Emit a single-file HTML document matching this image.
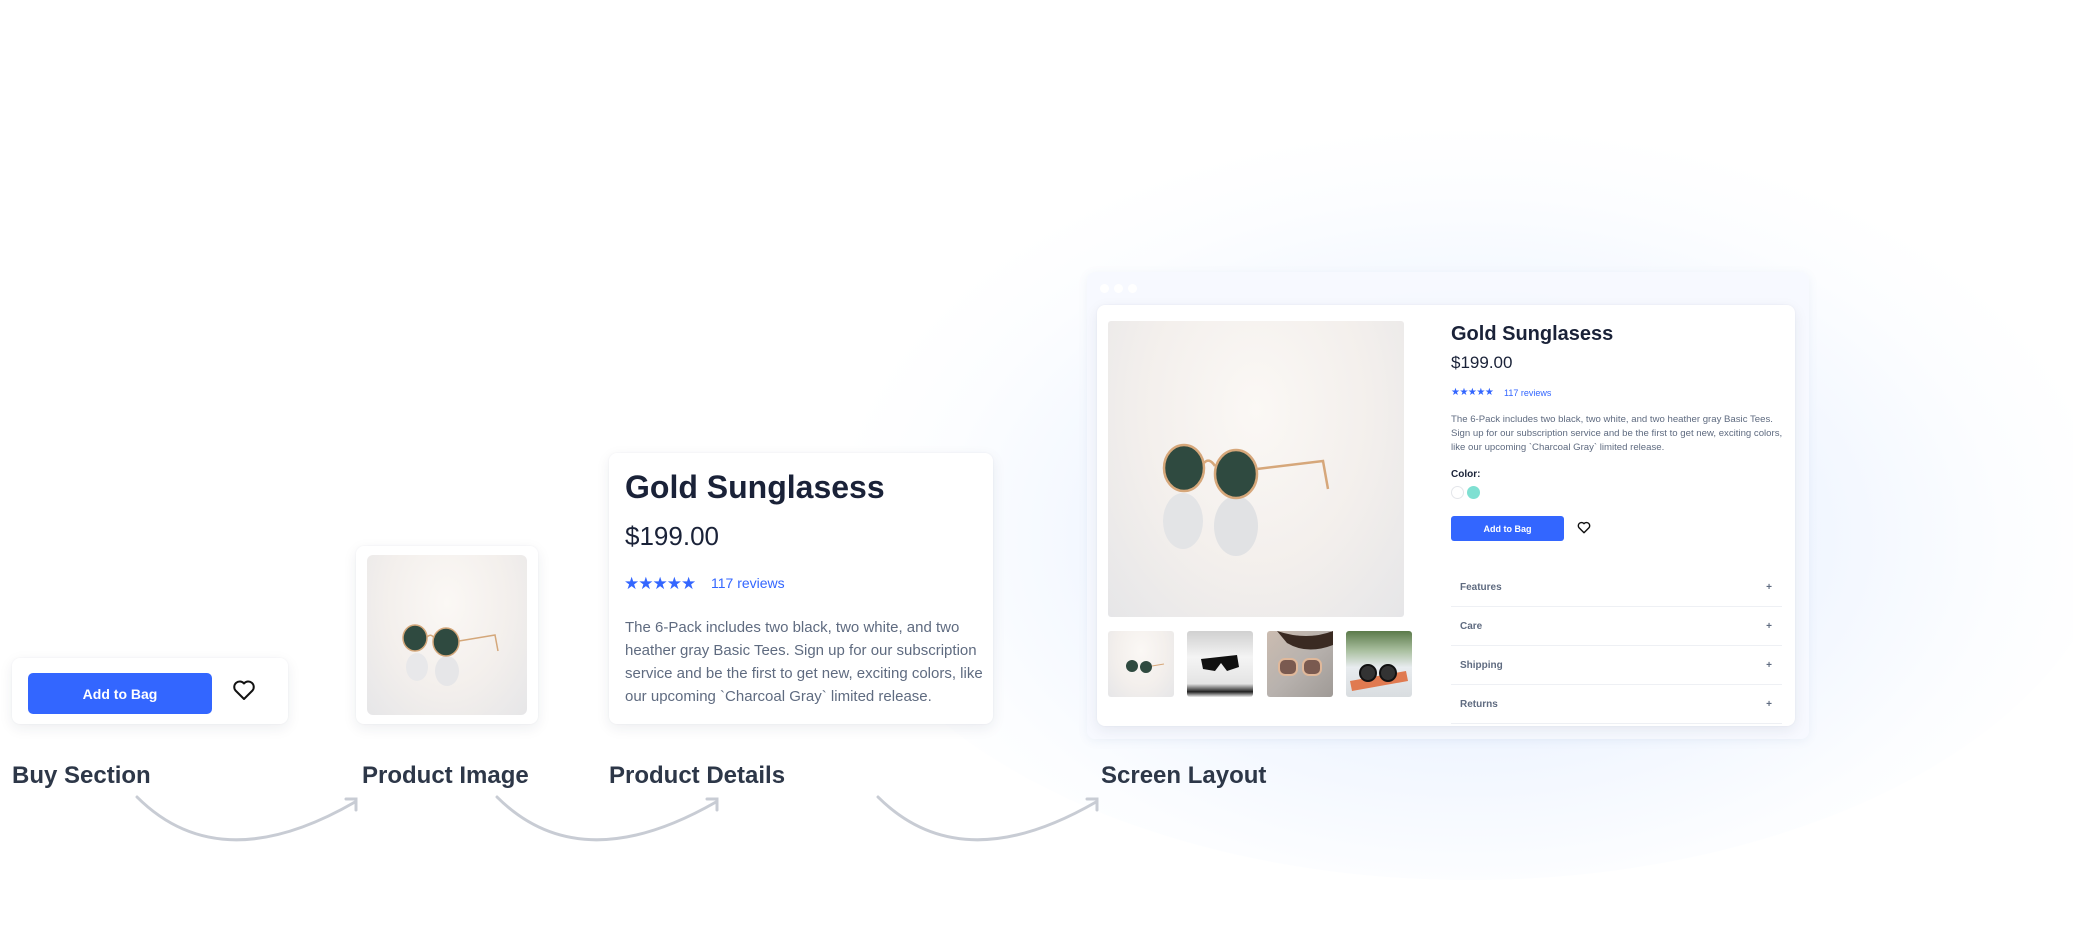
<!DOCTYPE html>
<html><head><meta charset="utf-8"><style>
*{margin:0;padding:0;box-sizing:border-box}
body{width:2073px;height:944px;overflow:hidden;position:relative;background:#fff;font-family:"Liberation Sans",sans-serif}
.abs{position:absolute}
.glow{left:820px;top:120px;width:1300px;height:760px;border-radius:50%;background:radial-gradient(ellipse at 50% 55%,rgba(218,232,255,.85) 0%,rgba(228,238,255,.55) 35%,rgba(242,247,255,.25) 58%,rgba(255,255,255,0) 70%)}
.card{background:#fff;border-radius:8px;box-shadow:0 4px 14px rgba(30,40,70,.08),0 0 2px rgba(30,40,70,.05)}
.btn{background:#3366ff;color:#fff;border-radius:5px;display:flex;align-items:center;justify-content:center;font-weight:bold}
.lbl{font-size:24px;color:#2d3748;top:762px;font-weight:bold}
.photo{background:radial-gradient(ellipse at 50% 30%,#fbf8f5 0%,#f3efec 55%,#e6e6e8 100%);overflow:hidden}
.desc{color:#5f6b80}
.acc{left:1451px;width:331px;height:39px;border-bottom:1px solid #eef0f4;font-size:10px;color:#5f6b80;font-weight:bold;padding-left:9px;display:flex;align-items:center;justify-content:space-between;padding-right:10px}
</style></head><body>
<div class="abs glow"></div>

<div class="abs card" style="left:12px;top:658px;width:276px;height:66px"></div>
<div class="abs btn" style="left:28px;top:673px;width:184px;height:41px;font-size:14px">Add to Bag</div>
<svg class="abs" style="left:232px;top:679px" width="24" height="22" viewBox="0 0 24 22"><path d="M12 20 L3.5 11.5 A5 5 0 0 1 12 4.5 A5 5 0 0 1 20.5 11.5 Z" fill="none" stroke="#111" stroke-width="2" stroke-linejoin="round"/></svg>

<div class="abs card" style="left:356px;top:546px;width:182px;height:178px"></div>
<div class="abs photo" style="left:367px;top:555px;width:160px;height:160px;border-radius:6px">
<svg width="160" height="160" viewBox="0 0 160 160"><ellipse cx="50" cy="112" rx="11" ry="14" fill="#e8e8ea"/><ellipse cx="80" cy="116" rx="12" ry="15" fill="#e6e6e8"/><ellipse cx="48" cy="83" rx="12" ry="13" fill="#2f4a40" stroke="#d4a77a" stroke-width="1.5"/><ellipse cx="79" cy="87" rx="13" ry="14" fill="#2f4a40" stroke="#d4a77a" stroke-width="1.5"/><path d="M60 82 Q64 78 67 83 M92 86 L128 80 L131 96" fill="none" stroke="#d4a77a" stroke-width="1.5"/></svg></div>

<div class="abs card" style="left:609px;top:453px;width:384px;height:271px"></div>
<div class="abs" style="left:625px;top:469px;font-size:32px;font-weight:bold;color:#1a2238">Gold Sunglasess</div>
<div class="abs" style="left:625px;top:521px;font-size:26px;color:#1a2238">$199.00</div>
<div class="abs" style="left:624px;top:574px;font-size:17px;color:#3366ff;letter-spacing:-1px">★★★★★</div>
<div class="abs" style="left:711px;top:575px;font-size:14px;color:#3366ff">117 reviews</div>
<div class="abs desc" style="left:625px;top:616px;width:362px;font-size:15px;line-height:23px">The 6-Pack includes two black, two white, and two heather gray Basic Tees. Sign up for our subscription service and be the first to get new, exciting colors, like our upcoming `Charcoal Gray` limited release.</div>

<div class="abs lbl" style="left:12px">Buy Section</div>
<div class="abs lbl" style="left:362px">Product Image</div>
<div class="abs lbl" style="left:609px">Product Details</div>
<div class="abs lbl" style="left:1101px">Screen Layout</div>

<svg class="abs" style="left:0;top:0" width="2073" height="944"><g fill="none" stroke="#c8ccd4" stroke-width="3" stroke-linecap="round">
<path d="M137 797 Q220 880 355 802 M346 799 L356 799 L356 810"/>
<path d="M497 797 Q580 880 716 802 M707 799 L717 799 L717 810"/>
<path d="M878 797 Q961 880 1096 802 M1087 799 L1097 799 L1097 810"/>
</g></svg>

<div class="abs" style="left:1087px;top:272px;width:722px;height:467px;border-radius:8px;background:rgba(246,249,255,.92);box-shadow:0 2px 10px rgba(80,110,170,.08)"></div>
<div class="abs" style="left:1100px;top:284px;width:9px;height:9px;border-radius:50%;background:#fff"></div>
<div class="abs" style="left:1114px;top:284px;width:9px;height:9px;border-radius:50%;background:#fff"></div>
<div class="abs" style="left:1128px;top:284px;width:9px;height:9px;border-radius:50%;background:#fff"></div>
<div class="abs card" style="left:1097px;top:305px;width:698px;height:421px"></div>
<div class="abs photo" style="left:1108px;top:321px;width:296px;height:296px;border-radius:3px">
<svg width="296" height="296" viewBox="0 0 296 296"><ellipse cx="75" cy="200" rx="20" ry="28" fill="#e3e4e6"/><ellipse cx="128" cy="205" rx="22" ry="30" fill="#e1e2e4"/><ellipse cx="76" cy="147" rx="20" ry="23" fill="#2f4a40" stroke="#d6a77a" stroke-width="2.5"/><ellipse cx="128" cy="153" rx="21" ry="24" fill="#2f4a40" stroke="#d6a77a" stroke-width="2.5"/><path d="M96 142 Q101 136 107 145 M149 148 L215 140 L220 168" fill="none" stroke="#d6a77a" stroke-width="2.5"/></svg></div>
<div class="abs photo" style="left:1108px;top:631px;width:66px;height:66px;border-radius:3px"><svg width="66" height="66"><circle cx="24" cy="35" r="6" fill="#2f4a40"/><circle cx="38" cy="36" r="6" fill="#2f4a40"/><path d="M44 35 L56 33" stroke="#d6a77a"/></svg></div>
<div class="abs" style="left:1187px;top:631px;width:66px;height:66px;border-radius:3px;background:linear-gradient(#d0d0d0,#f4f4f4 40%,#e4e4e4 80%,#222 92%,#eee)"><svg width="66" height="66"><path d="M14 28 L50 24 L52 36 L40 40 L34 32 L28 40 L16 38 Z" fill="#111"/></svg></div>
<div class="abs" style="left:1267px;top:631px;width:66px;height:66px;border-radius:3px;background:linear-gradient(135deg,#cbbcb0,#b8b2ae 50%,#9f9a96)"><svg width="66" height="66"><path d="M10 0 Q40 10 66 0 L66 14 Q40 24 20 12Z" fill="#3a2a22"/><rect x="12" y="28" width="18" height="16" rx="6" fill="#7a5a50" stroke="#e0b89a" stroke-width="2"/><rect x="36" y="28" width="18" height="16" rx="6" fill="#7a5a50" stroke="#e0b89a" stroke-width="2"/></svg></div>
<div class="abs" style="left:1346px;top:631px;width:66px;height:66px;border-radius:3px;background:linear-gradient(#5b7a4a,#aac0a0 30%,#e8ecef 55%,#d9dde0)"><svg width="66" height="66"><path d="M4 50 L60 40 L62 50 L6 60Z" fill="#e07a50"/><circle cx="22" cy="42" r="8" fill="#333" stroke="#111" stroke-width="2"/><circle cx="42" cy="42" r="8" fill="#333" stroke="#111" stroke-width="2"/></svg></div>

<div class="abs" style="left:1451px;top:323px;font-size:20px;font-weight:bold;color:#1a2238">Gold Sunglasess</div>
<div class="abs" style="left:1451px;top:353px;font-size:17px;color:#1a2238">$199.00</div>
<div class="abs" style="left:1451px;top:387px;font-size:10px;color:#3366ff;letter-spacing:-0.5px">★★★★★</div>
<div class="abs" style="left:1504px;top:388px;font-size:9px;color:#3366ff">117 reviews</div>
<div class="abs desc" style="left:1451px;top:413px;width:335px;font-size:9.6px;line-height:14px">The 6-Pack includes two black, two white, and two heather gray Basic Tees. Sign up for our subscription service and be the first to get new, exciting colors, like our upcoming `Charcoal Gray` limited release.</div>
<div class="abs" style="left:1451px;top:469px;font-size:10px;font-weight:bold;color:#1a2238">Color:</div>
<div class="abs" style="left:1451px;top:486px;width:13px;height:13px;border-radius:50%;border:1px solid #e4e6ea;background:#fff"></div>
<div class="abs" style="left:1467px;top:486px;width:13px;height:13px;border-radius:50%;background:#7fe0d2"></div>
<div class="abs btn" style="left:1451px;top:516px;width:113px;height:25px;font-size:9px;border-radius:3px">Add to Bag</div>
<svg class="abs" style="left:1577px;top:521px" width="14" height="13" viewBox="0 0 24 22"><path d="M12 20 L3.5 11.5 A5 5 0 0 1 12 4.5 A5 5 0 0 1 20.5 11.5 Z" fill="none" stroke="#111" stroke-width="2.4" stroke-linejoin="round"/></svg>

<div class="abs acc" style="top:568px"><span>Features</span><span>+</span></div>
<div class="abs acc" style="top:607px"><span>Care</span><span>+</span></div>
<div class="abs acc" style="top:646px"><span>Shipping</span><span>+</span></div>
<div class="abs acc" style="top:685px"><span>Returns</span><span>+</span></div>
</body></html>
